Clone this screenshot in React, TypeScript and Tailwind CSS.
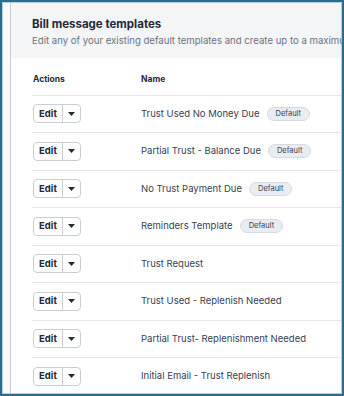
import React from "react";

const rows: { name: string; def?: boolean }[] = [
  { name: "Trust Used No Money Due", def: true },
  { name: "Partial Trust - Balance Due", def: true },
  { name: "No Trust Payment Due", def: true },
  { name: "Reminders Template", def: true },
  { name: "Trust Request" },
  { name: "Trust Used - Replenish Needed" },
  { name: "Partial Trust- Replenishment Needed" },
  { name: "Initial Email - Trust Replenish" },
];

function EditButton() {
  return (
    <div className="flex h-[19px] w-[48px] items-stretch rounded-[4px] border border-[#c9ced6] bg-white">
      <div className="flex w-[29px] items-center justify-center border-r border-[#c9ced6] text-[9.5px] font-bold text-[#1f2937]">
        Edit
      </div>
      <div className="flex flex-1 items-center justify-center">
        <svg width="7" height="4" viewBox="0 0 7 4">
          <path d="M0 0 L7 0 L3.5 4 Z" fill="#1f2937" />
        </svg>
      </div>
    </div>
  );
}

export default function App() {
  return (
    <div
      className="h-[396px] w-[344px] overflow-hidden border-2 border-[#2a6b8e] bg-white"
      style={{ fontFamily: "Inter, 'Noto Sans', sans-serif" }}
    >
      <div className="flex h-full w-full border border-[#b7cfdc]">
        <div className="w-[7px] bg-[#f9fafb]" />
        <div className="flex min-w-0 flex-1 flex-col border-l border-[#c8ccd2]">
          <div className="h-[55px] shrink-0 bg-[#f4f5f7] pl-[21px] pt-[14px]">
            <div className="whitespace-nowrap text-[11.5px] font-bold leading-[15px] text-[#1f2937]">
              Bill message templates
            </div>
            <div className="mt-[2px] whitespace-nowrap text-[9.6px] leading-[13px] text-[#6b7280]">
              Edit any of your existing default templates and create up to a maximum of
            </div>
          </div>
          <div className="pl-[21px]">
            <div className="flex h-[37.5px] items-center border-b border-[#e5e7eb] pt-[7px] text-[8.5px] font-bold text-[#1f2937]">
              <div className="w-[109px] pl-[1px]">Actions</div>
              <div>Name</div>
            </div>
            {rows.map((r) => (
              <div
                key={r.name}
                className="flex h-[37.5px] items-center border-b border-[#e5e7eb]"
              >
                <div className="w-[109px] pl-[1px]">
                  <EditButton />
                </div>
                <div className="flex items-center whitespace-nowrap text-[9.5px] text-[#374151]">
                  <span>{r.name}</span>
                  {r.def && (
                    <span className="ml-[7px] rounded-full border border-[#d6dae0] bg-[#e9ecf0] px-[8px] text-[7.5px] leading-[12px] text-[#374151]">
                      Default
                    </span>
                  )}
                </div>
              </div>
            ))}
          </div>
        </div>
      </div>
    </div>
  );
}
